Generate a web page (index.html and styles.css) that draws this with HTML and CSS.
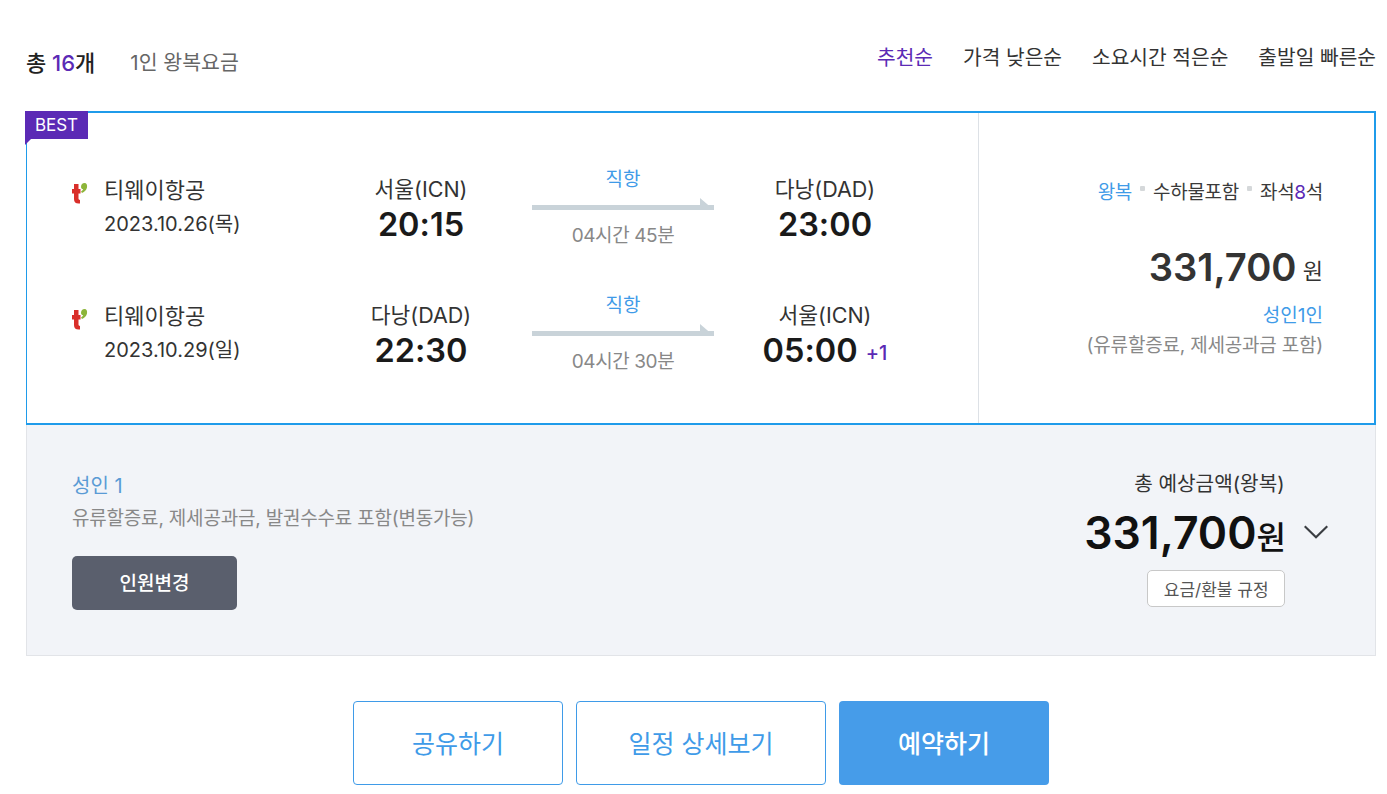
FILE: index.html
```html
<!DOCTYPE html>
<html lang="ko">
<head>
    <meta charset="UTF-8">
    <title>항공권 검색 결과</title>
    <link rel="stylesheet" href="styles.css">
</head>
<body>

<div id="results">
    <div class="top-bar">
        <div class="summary">
            <span class="count">총 <em>16</em>개</span>
            <span class="fare-note">1인 왕복요금</span>
        </div>
        <div class="sort-menu">
            <a class="active">추천순</a>
            <a>가격 낮은순</a>
            <a>소요시간 적은순</a>
            <a>출발일 빠른순</a>
        </div>
    </div>

    <div class="ticket">
        <span class="best-badge">BEST</span>
        <div class="legs">
            <div class="leg">
                <div class="airline">
                    <svg class="airline-logo" viewBox="0 0 16 21"><path fill="#d92f2a" d="M2 1h4.500v5h2v4.500h-2v5c0 .8.5 1.300 1.500 1.500v3.500c-4 .5-6-1-6-4.500v-5.500H0V6h2z"/><path fill="#8db53a" d="M9 4c0-2.500 1.500-4 3.500-4s3 2 2.500 4.500-2.500 4.500-5 5.500l-1-1.500c1-.5 1.800-1.300 2.200-2.300-1.500 0-2.200-1-2.200-2.700z"/></svg>
                    <div class="airline-text">
                        <div class="airline-name">티웨이항공</div>
                        <div class="airline-date">2023.10.26(목)</div>
                    </div>
                </div>
                <div class="point">
                    <div class="city">서울(ICN)</div>
                    <div class="time">20:15</div>
                </div>
                <div class="route">
                    <div class="direct">직항</div>
                    <div class="arrow"></div>
                    <div class="duration">04시간 45분</div>
                </div>
                <div class="point">
                    <div class="city">다낭(DAD)</div>
                    <div class="time">23:00</div>
                </div>
            </div>
            <div class="leg">
                <div class="airline">
                    <svg class="airline-logo" viewBox="0 0 16 21"><path fill="#d92f2a" d="M2 1h4.500v5h2v4.500h-2v5c0 .8.5 1.300 1.500 1.500v3.500c-4 .5-6-1-6-4.500v-5.500H0V6h2z"/><path fill="#8db53a" d="M9 4c0-2.500 1.500-4 3.500-4s3 2 2.500 4.500-2.500 4.500-5 5.500l-1-1.500c1-.5 1.800-1.300 2.200-2.300-1.500 0-2.200-1-2.200-2.700z"/></svg>
                    <div class="airline-text">
                        <div class="airline-name">티웨이항공</div>
                        <div class="airline-date">2023.10.29(일)</div>
                    </div>
                </div>
                <div class="point">
                    <div class="city">다낭(DAD)</div>
                    <div class="time">22:30</div>
                </div>
                <div class="route">
                    <div class="direct">직항</div>
                    <div class="arrow"></div>
                    <div class="duration">04시간 30분</div>
                </div>
                <div class="point">
                    <div class="city">서울(ICN)</div>
                    <div class="time">05:00<span class="next-day">+1</span></div>
                </div>
            </div>
        </div>
        <div class="price-box">
            <div class="tags">
                <span class="tag-trip">왕복</span>
                <i class="dot"></i>
                <span>수하물포함</span>
                <i class="dot"></i>
                <span>좌석<em>8</em>석</span>
            </div>
            <div class="price"><strong>331,700</strong> <span class="won">원</span></div>
            <div class="price-who">성인1인</div>
            <div class="price-note">(유류할증료, 제세공과금 포함)</div>
        </div>
    </div>

    <div class="detail">
        <div class="detail-left">
            <div class="adult">성인 1</div>
            <div class="adult-note">유류할증료, 제세공과금, 발권수수료 포함(변동가능)</div>
            <button class="change-btn">인원변경</button>
        </div>
        <div class="detail-right">
            <div class="total-label">총 예상금액(왕복)</div>
            <div class="total-row">
                <div class="total"><strong>331,700</strong>원</div>
                <svg class="chevron" viewBox="0 0 24 14"><path d="M.7 1.200 12 12.300 23.300 1.200" fill="none" stroke="#3a3d42" stroke-width="2.200"/></svg>
            </div>
            <button class="rule-btn">요금/환불 규정</button>
        </div>
    </div>

    <div class="actions">
        <button class="btn-line share">공유하기</button>
        <button class="btn-line schedule">일정 상세보기</button>
        <button class="btn-fill">예약하기</button>
    </div>
</div>

</body>
</html>
```

FILE: styles.css
```css
* { box-sizing: border-box; }
body {
    margin: 0;
    font-family: Inter, "Noto Sans CJK KR", sans-serif;
    color: #222;
    background: #fff;
}
em { font-style: normal; }
button { font-family: inherit; cursor: pointer; }

#results {
    width: 1350px;
    margin-left: 26px;
}

.top-bar {
    height: 111px;
    padding-top: 42px;
    display: flex;
    justify-content: space-between;
    align-items: flex-start;
}
.summary { display: flex; align-items: center; height: 38px; }
.count { font-size: 22px; font-weight: 500; color: #222; }
.count em { color: #5b2ab5; }
.fare-note { margin-left: 35px; font-size: 20.5px; color: #666; }
.sort-menu { display: flex; gap: 30px; margin-top: 2px; font-size: 20.3px; line-height: 28px; color: #333; }
.sort-menu .active { color: #5b2ab5; }

.ticket {
    position: relative;
    height: 314px;
    display: flex;
    border: 2px solid #1f9bea;
    border-left-width: 1px;
}
.best-badge {
    position: absolute;
    left: -2px;
    top: -2px;
    width: 63px;
    height: 28px;
    background: #5b2ab5;
    color: #fff;
    font-size: 17px;
    line-height: 28px;
    text-align: center;
}
.best-badge::after {
    content: "";
    position: absolute;
    left: 0;
    top: 28px;
    border-top: 6px solid #5b2ab5;
    border-right: 6px solid transparent;
}

.legs {
    width: 952px;
    padding: 52px 0 0 45px;
    border-right: 1px solid #dde1e6;
}
.leg {
    height: 126px;
    display: grid;
    grid-template-columns: 238px 150px 182px 150px;
    column-gap: 36px;
}
.airline { display: flex; align-items: flex-start; padding-top: 10px; white-space: nowrap; }
.airline-logo { width: 16px; height: 21px; margin-top: 8px; margin-right: 16px; flex: none; }
.airline-name { font-size: 22px; line-height: 30px; color: #333; }
.airline-date { margin-top: 3px; font-size: 20px; line-height: 32px; color: #333; }

.point { text-align: center; padding-top: 9px; white-space: nowrap; }
.city { font-size: 21.5px; line-height: 30px; color: #333; }
.time { font-size: 32.5px; font-weight: 600; line-height: 42px; color: #1a1a1a; font-feature-settings: "calt" 0; }
.next-day {
    margin-left: 8px;
    font-size: 20px;
    font-weight: 500;
    color: #5b2ab5;
    vertical-align: 2px;
}

.route { text-align: center; }
.direct { font-size: 19px; line-height: 30px; color: #3f9be8; }
.arrow {
    position: relative;
    height: 5px;
    margin-top: 10px;
    background: #c9d3d9;
}
.arrow::after {
    content: "";
    position: absolute;
    right: 0;
    bottom: 0;
    border-bottom: 12px solid #c9d3d9;
    border-right: 14px solid transparent;
}
.duration { margin-top: 11px; font-size: 19px; line-height: 30px; color: #888; letter-spacing: -0.4px; }

.price-box { flex: 1; padding: 64px 51px 0 0; text-align: right; }
.tags { display: flex; justify-content: flex-end; align-items: center; gap: 8px; font-size: 19px; line-height: 32px; color: #3a3a3a; letter-spacing: -0.3px; }
.tags em { color: #5b2ab5; }
.tag-trip { color: #3f9be8; }
.dot { width: 5px; height: 5px; margin-bottom: 9px; background: #d5d8da; border-radius: 1px; }
.price { margin-top: 30px; font-size: 22px; line-height: 56px; color: #333; }
.price strong { font-size: 38.2px; font-weight: 600; color: #333; }
.won { vertical-align: 2px; }
.price-who { margin-top: 0; font-size: 19px; line-height: 30px; color: #3f9be8; }
.price-note { font-size: 19px; line-height: 30px; color: #888; letter-spacing: -0.2px; }

.detail {
    height: 231px;
    display: flex;
    justify-content: space-between;
    padding: 44px 47px 0 45px;
    background: #f2f4f8;
    border: 1px solid #e2e4e8;
    border-top: 0;
}
.adult { font-size: 20px; line-height: 34px; color: #5a9bd5; }
.adult-note { font-size: 19px; line-height: 32px; color: #888; letter-spacing: -0.2px; }
.change-btn {
    display: block;
    width: 165px;
    height: 54px;
    margin-top: 21px;
    padding-bottom: 5px;
    border: 0;
    border-radius: 5px;
    background: #5a5f6d;
    color: #fff;
    font-size: 19px;
    font-weight: 500;
}

.detail-right { display: flex; flex-direction: column; align-items: flex-start; }
.total-label { margin-left: 50px; font-size: 20.2px; line-height: 30px; color: #333; }
.total-row { display: flex; align-items: center; margin-top: 4px; }
.total { font-size: 32px; font-weight: 500; color: #111; line-height: 60px; }
.total strong { font-size: 44.5px; font-weight: 600; }
.chevron { width: 24px; height: 14px; margin-left: 18px; margin-bottom: 7px; }
.rule-btn {
    width: 138px;
    height: 37px;
    margin: 2px 0 0 63px;
    background: #fff;
    border: 1px solid #c8c8c8;
    border-radius: 5px;
    color: #555;
    font-size: 17px;
}

.actions {
    display: flex;
    justify-content: center;
    gap: 13px;
    margin-top: 45px;
}
.actions button { height: 84px; padding-bottom: 4px; border-radius: 4px; font-size: 25px; }
.btn-line { background: #fff; border: 1px solid #3f9be8; color: #3f9be8; font-weight: 400; }
.share { width: 210px; }
.schedule { width: 250px; }
.btn-fill { width: 210px; background: #469ce9; border: 0; color: #fff; font-weight: 500; }
```
